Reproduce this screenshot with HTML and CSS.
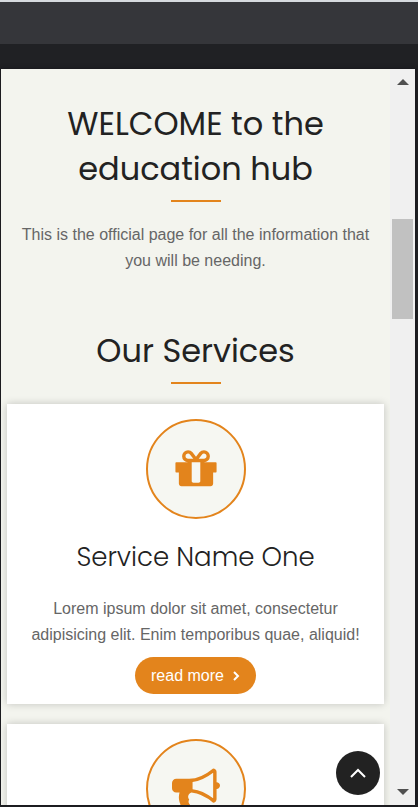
FILE: index.html
```html
<!DOCTYPE html>
<html lang="en">
<head>
<meta charset="utf-8">
<meta name="viewport" content="width=device-width, initial-scale=1">
<title>Education Hub</title>
<link rel="stylesheet" href="styles.css">
</head>
<body>
<div class="toolbar"></div>
<div class="device">
  <main class="page">
    <section class="intro">
      <h1 class="title">WELCOME to the education hub</h1>
      <p class="text">This is the official page for all the information that you will be needing.</p>
    </section>
    <section class="services">
      <h2 class="title">Our Services</h2>
      <article class="card">
        <span class="icon">
          <svg viewBox="0 0 1792 1792" aria-hidden="true"><path d="M1056 1356v-716h-320v716q0 25 18 38.500t46 13.500h192q28 0 46-13.500t18-38.500zm-456-844h195l-126-161q-26-31-69-31-40 0-68 28t-28 68 28 68 68 28zm688-96q0-40-28-68t-68-28q-43 0-69 31l-125 161h194q40 0 68-28t28-68zm376 256v320q0 14-9 23t-23 9h-96v416q0 40-28 68t-68 28h-1088q-40 0-68-28t-28-68v-416h-96q-14 0-23-9t-9-23v-320q0-14 9-23t23-9h440q-93 0-158.500-65.500t-65.500-158.500 65.500-158.500 158.500-65.500q107 0 168 77l128 165 128-165q61-77 168-77 93 0 158.500 65.500t65.500 158.500-65.500 158.500-158.500 65.500h440q14 0 23 9t9 23z"/></svg>
        </span>
        <h3 class="card-title">Service Name One</h3>
        <p class="text">Lorem ipsum dolor sit amet, consectetur adipisicing elit. Enim temporibus quae, aliquid!</p>
        <a class="more" href="#">read more
          <svg viewBox="0 0 8 12" aria-hidden="true"><path d="M2 2l4 4-4 4"/></svg>
        </a>
      </article>
      <article class="card">
        <span class="icon">
          <svg viewBox="0 0 1792 1792" aria-hidden="true"><path d="M1664 640q53 0 90.500 37.500t37.500 90.500-37.500 90.500-90.500 37.500v384q0 52-38 90t-90 38q-417-347-812-380-58 19-91 66t-31 100.500 40 92.500q-20 33-23 65.500t6 58 33.500 55 48 50 61.500 50.500q-29 58-111.500 83t-168.500 11.500-132-55.500q-7-23-29.500-87.500t-32-94.500-23-89-15-101 3.500-98 22-110.500h-122q-66 0-113-47t-47-113v-192q0-66 47-113t113-47h480q435 0 896-384 52 0 90 38t38 90v384zm-128 604v-954q-394 302-768 343v270q377 42 768 341z"/></svg>
        </span>
      </article>
    </section>
  </main>
  <div class="scrollbar" aria-hidden="true">
    <span class="arrow arrow-up"></span>
    <span class="track"><span class="thumb"></span></span>
    <span class="arrow arrow-down"></span>
  </div>
  <button class="to-top" type="button" aria-label="Back to top">
    <svg viewBox="0 0 16 10" aria-hidden="true"><path d="M1 9l7-7 7 7"/></svg>
  </button>
</div>
</body>
</html>
```
FILE: styles.css
```css
* { box-sizing: border-box; margin: 0; padding: 0; }

body {
  display: flex;
  flex-direction: column;
  height: 100vh;
  overflow: hidden;
  background: #202124;
  color: #222;
  font: 16px/26px "Liberation Sans", Arial, sans-serif;
}

.toolbar {
  flex: none;
  height: 44px;
  margin-bottom: 25px;
  background: #35363a;
  border-top: 2px solid #d6dade;
}

.device {
  position: relative;
  display: flex;
  flex: 1;
  min-height: 0;
  margin: 0 3px 2px 1px;
  overflow: hidden;
  box-shadow: 0 0 4px #14141a;
}

.page {
  flex: 1;
  min-width: 0;
  padding: 32px 6px 0;
  overflow: hidden;
  background: #f3f4ee;
  text-align: center;
}

.title {
  font: 400 32px/45px Poppins, Inter, sans-serif;
}

.title::after {
  content: "";
  display: block;
  width: 50px;
  height: 2px;
  margin: 9px auto 0;
  background: #e3841c;
}

.text { color: #666; }

.intro .title { padding: 0 40px; }
.intro .text { padding: 20px 12px 0; }

.services { padding-top: 54px; }

.card {
  margin-top: 20px;
  padding: 15px 15px 10px;
  background: #fff;
  box-shadow: 0 0 8px rgba(0, 0, 0, 0.2);
}

.icon {
  display: flex;
  align-items: center;
  justify-content: center;
  width: 100px;
  height: 100px;
  margin: 0 auto;
  background: #f6f7f2;
  border: 2px solid #e3841c;
  border-radius: 50%;
}

.icon svg {
  width: 48px;
  height: 48px;
  fill: #e3841c;
}

.card-title {
  margin: 20px 0;
  font: 300 26px/37px Poppins, Inter, sans-serif;
}

.more {
  display: flex;
  align-items: center;
  gap: 8px;
  width: max-content;
  height: 37px;
  margin: 9px auto 0;
  padding: 0 16px;
  background: #e3841c;
  border-radius: 20px;
  color: #fff;
  text-decoration: none;
}

.more svg {
  width: 8px;
  height: 12px;
}

.more path,
.to-top path {
  fill: none;
  stroke: #fff;
  stroke-width: 2;
}

.scrollbar {
  display: flex;
  flex: none;
  flex-direction: column;
  width: 25px;
  padding: 10px 2px;
  background: #f0f0f0;
}

.arrow {
  align-self: center;
  border: 6px solid transparent;
}

.arrow-up { border-top: 0; border-bottom-color: #505050; }
.arrow-down { border-bottom: 0; border-top-color: #505050; }

.track {
  flex: 1;
  padding-top: 134px;
}

.thumb {
  display: block;
  height: 100px;
  background: #c1c1c1;
}

.to-top {
  position: absolute;
  right: 35px;
  bottom: 10px;
  display: flex;
  align-items: center;
  justify-content: center;
  width: 44px;
  height: 44px;
  background: #222;
  border: 0;
  border-radius: 50%;
}

.to-top svg {
  width: 16px;
  height: 10px;
}
```
